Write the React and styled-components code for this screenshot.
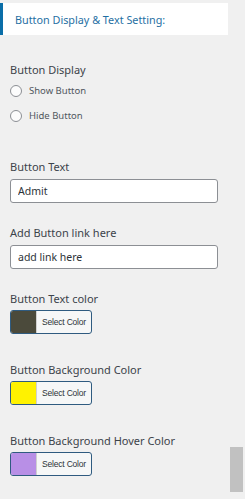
import { useState } from "react"
import styled, { createGlobalStyle } from "styled-components"

const GlobalStyle = createGlobalStyle`
  html, body {
    margin: 0;
    padding: 0;
    background: #f0f0f0;
  }
  body {
    font-family: "Noto Sans", "Open Sans", sans-serif;
    color: #3c434a;
  }
`

const colorFields = [
    { label: "Button Text color", color: "#4b4a3b" },
    { label: "Button Background Color", color: "#fff200" },
    { label: "Button Background Hover Color", color: "#b88fe6" },
]

export default function App() {
    const [display, setDisplay] = useState("")
    const [text, setText] = useState("Admit")
    const [link, setLink] = useState("add link here")

    return (
        <Page>
            <GlobalStyle />
            <Header>Button Display &amp; Text Setting:</Header>

            <Settings>
                <Group $gap={31}>
                    <Label $space={0}>Button Display</Label>
                    <RadioRow onClick={() => setDisplay("show")}>
                        <Radio $checked={display === "show"} />
                        Show Button
                    </RadioRow>
                    <RadioRow onClick={() => setDisplay("hide")}>
                        <Radio $checked={display === "hide"} />
                        Hide Button
                    </RadioRow>
                </Group>

                <Group $gap={22}>
                    <Label>Button Text</Label>
                    <TextInput value={text} onChange={e => setText(e.target.value)} />
                </Group>

                <Group $gap={22}>
                    <Label>Add Button link here</Label>
                    <TextInput value={link} onChange={e => setLink(e.target.value)} />
                </Group>

                {colorFields.map(field => (
                    <Group key={field.label} $gap={28}>
                        <Label $space={3}>{field.label}</Label>
                        <ColorButton type="button">
                            <Swatch $color={field.color} />
                            <span>Select Color</span>
                        </ColorButton>
                    </Group>
                ))}
            </Settings>

            <ScrollThumb />
        </Page>
    )
}

const Page = styled.div`
    position: relative;
    width: 245px;
    height: 499px;
    padding-top: 3px;
    box-sizing: border-box;
    overflow: hidden;
`

const Header = styled.div`
    width: 228px;
    height: 32px;
    box-sizing: border-box;
    background: #ffffff;
    border-left: 3px solid #0a6ea8;
    padding-left: 12px;
    display: flex;
    align-items: center;
    font-size: 10.8px;
    color: #1f6fa3;
`

const Settings = styled.div`
    display: flex;
    flex-direction: column;
    padding: 27px 0 0 10px;
`

const Group = styled.div`
    display: flex;
    flex-direction: column;
    align-items: flex-start;
    margin-bottom: ${p => p.$gap}px;
`

const Label = styled.div`
    font-size: 11px;
    line-height: 16px;
    color: #3c434a;
    margin-bottom: ${p => p.$space ?? 4}px;
`

const RadioRow = styled.label`
    display: flex;
    align-items: center;
    gap: 7px;
    height: 25px;
    font-size: 9.5px;
    color: #50575e;
    cursor: pointer;
`

const Radio = styled.span`
    width: 12px;
    height: 12px;
    box-sizing: border-box;
    border: 1px solid #8c8f94;
    border-radius: 50%;
    background: ${p => (p.$checked ? "radial-gradient(circle, #2271b1 0 3px, #fff 3.5px)" : "#fcfcfc")};
`

const TextInput = styled.input`
    width: 208px;
    height: 24px;
    box-sizing: border-box;
    border: 1px solid #8c8f94;
    border-radius: 3px;
    background: #ffffff;
    padding: 0 7px;
    font-family: "Noto Sans", "Open Sans", sans-serif;
    font-size: 10.5px;
    color: #2c3338;
    outline: none;
`

const ColorButton = styled.button`
    display: flex;
    align-items: stretch;
    width: 82px;
    height: 24px;
    padding: 0;
    box-sizing: border-box;
    border: 1px solid #2f5b80;
    border-radius: 3px;
    background: #f6f7f7;
    overflow: hidden;
    cursor: pointer;

    span {
        flex: 1;
        display: flex;
        align-items: center;
        justify-content: center;
        font-family: "Liberation Sans", sans-serif;
        font-size: 8.5px;
        color: #2c3338;
        letter-spacing: -0.2px;
    }
`

const Swatch = styled.i`
    width: 25px;
    background: ${p => p.$color};
    border-right: 1px solid #d0d0d0;
`

const ScrollThumb = styled.div`
    position: absolute;
    left: 230px;
    top: 447px;
    width: 13px;
    height: 45px;
    background: #c1c1c1;
`
